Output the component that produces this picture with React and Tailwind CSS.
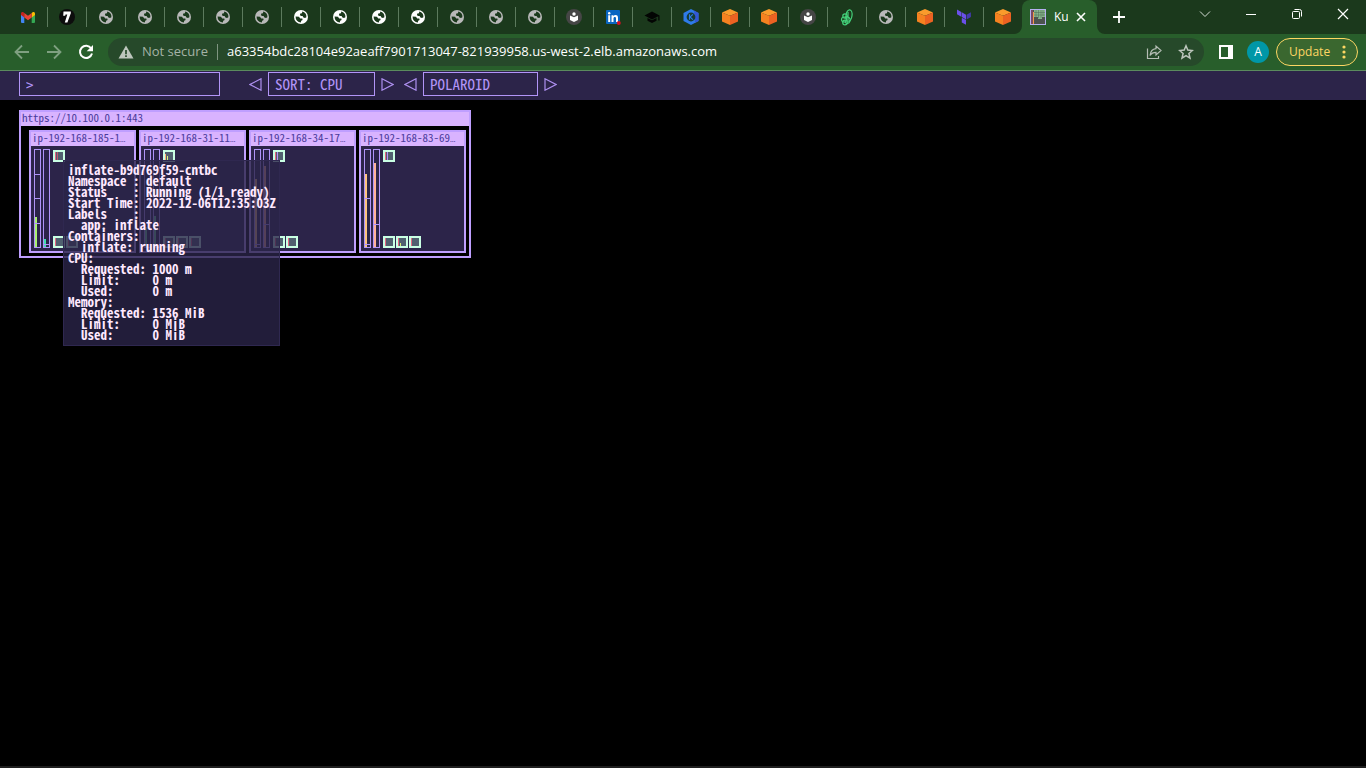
import React from 'react';

const MONO = "font-['Noto_Sans_Mono_CJK_SC','Liberation_Mono',monospace]";

function Globe({ bright }) {
  return (
    <svg viewBox="0 0 14 14" className="size-[14px]" aria-hidden="true">
      <circle cx="7" cy="7" r="7" fill={bright ? '#ffffff' : '#b9b9b9'} />
      <path
        d="M8.200 1.600 8 3.200 6.300 3.600 5.900 5.200 7.200 6 8.600 6.100 9.400 7.600 11 7.900 12.400 7.300A5.500 5.500 0 0 0 8.200 1.600ZM1.600 6.600 5 6.800 6.200 8.400 8.300 8.500 8.600 9.900 7.200 10.700 6.900 12.400A5.400 5.400 0 0 1 1.600 6.600Z"
        fill="#1b391c"
      />
    </svg>
  );
}

function Gmail() {
  return (
    <svg viewBox="0 0 14 11" className="h-[11px] w-[14px]" aria-hidden="true">
      <path d="M0 2v8a1 1 0 0 0 1 1h2.300V4.500Z" fill="#4285f4" />
      <path d="M14 2v8a1 1 0 0 1-1 1h-2.300V4.500Z" fill="#34a853" />
      <path d="M10.700 1v4.500L14 3V1.500C14 0 12.300-.5 11.200.5Z" fill="#fbbc04" />
      <path d="M0 1.500V3l3.300 2.500V1L2.800.5C1.700-.5 0 0 0 1.500Z" fill="#c5221f" />
      <path d="M3.300 1v4.500L7 8.300l3.700-2.800V1L7 3.800Z" fill="#ea4335" />
    </svg>
  );
}

function Seven() {
  return (
    <svg viewBox="0 0 16 16" className="size-4" aria-hidden="true">
      <circle cx="8" cy="8" r="8" fill="#0d0d0d" />
      <path d="M4.500 2.500h7.300v1.700L8.400 13.500H5.800L8.300 5.500H6.500L6.200 6.800H4.200Z" fill="#fff" />
    </svg>
  );
}

function Reader() {
  return (
    <svg viewBox="0 0 16 16" className="size-4" aria-hidden="true">
      <circle cx="8" cy="8" r="8" fill="#464646" />
      <path d="M4 6.500 8 8.300l4-1.800v4.600l-4 1.800-4-1.800Z" fill="#fff" />
      <circle cx="8" cy="5" r="1.700" fill="#fff" />
    </svg>
  );
}

function LinkedIn() {
  return (
    <svg viewBox="0 0 16 16" className="size-4" aria-hidden="true">
      <rect x="1" y="1" width="14" height="14" rx="1" fill="#0a66c2" />
      <path d="M3.200 6.300h2V13h-2ZM6.500 6.300h2v.9c.4-.7 1.100-1.100 2-1.100 1.900 0 2.500 1.200 2.500 3V13h-2V9.500c0-1-.3-1.600-1.100-1.600-.9 0-1.400.6-1.400 1.600V13h-2Z" fill="#fff" />
      <circle cx="4.200" cy="4.200" r="1.200" fill="#fff" />
      <circle cx="13.800" cy="14" r="2" fill="#d11124" />
    </svg>
  );
}

function Cap() {
  return (
    <svg viewBox="0 0 16 16" className="size-4" aria-hidden="true">
      <path d="M.5 6.500 8 2.500l7.500 4v5h-1.200V7.200L8 10.500ZM3.500 8.900 8 11.300l4.500-2.400v2.800L8 13.900l-4.500-2.200Z" fill="#030503" />
    </svg>
  );
}

function KubeHex() {
  return (
    <svg viewBox="0 0 16 16" className="size-4" aria-hidden="true">
      <path d="M8 0 15.500 4v8L8 16 .5 12V4Z" fill="#2e7bea" />
      <path d="M11 1.600 15.500 4v8L12 13.900Z" fill="#3358d4" />
      <circle cx="8" cy="8" r="4.400" fill="#173d33" />
      <path d="M6.500 5.300v5.400M9.900 5.300 7 8l2.900 2.700" stroke="#2e7bea" strokeWidth="1.100" fill="none" />
    </svg>
  );
}

function Cube() {
  return (
    <svg viewBox="0 0 16 16" className="size-4" aria-hidden="true">
      <path d="M8 0 16 3.500 8 6.800 0 3.500Z" fill="#fa9b2c" />
      <path d="M0 3.500 8 6.800V16L0 12.500Z" fill="#f58220" />
      <path d="M16 3.500 8 6.800V16l8-3.500Z" fill="#ec6222" />
    </svg>
  );
}

function Loops() {
  return (
    <svg viewBox="0 0 14 17" className="h-[17px] w-[14px]" fill="none" stroke="#44d17a" strokeWidth="1.200" aria-hidden="true">
      <ellipse cx="9" cy="6.500" rx="3" ry="5.700" transform="rotate(8 9 6.500)" />
      <circle cx="5" cy="7" r="2.200" />
      <circle cx="4" cy="10.500" r="2.500" />
      <circle cx="5" cy="13.500" r="2.300" />
      <path d="M5 8c3-1 6 1 5 4s-4 3-5 1M8 3v8" />
    </svg>
  );
}

function Terraform() {
  return (
    <svg viewBox="0 0 16 16" className="size-4" aria-hidden="true">
      <path d="M1 .500v4.700l4.300 2.500V3ZM5.800 3.300V8l4.200 2.400V5.700ZM5.800 8.700v4.700l4.200 2.400v-4.700Z" fill="#6b50ea" />
      <path d="M10.600 5.700v4.700l4.300-2.500V3.200Z" fill="#4339ae" />
    </svg>
  );
}

const tabs = [
  ['Gmail', <Gmail />],
  ['Seven', <Seven />],
  ...['1', '2', '3', '4', '5'].map((n) => ['Page ' + n, <Globe />]),
  ...['6', '7', '8', '9'].map((n) => ['Page ' + n, <Globe bright />]),
  ...['10', '11', '12'].map((n) => ['Page ' + n, <Globe />]),
  ['Reader', <Reader />],
  ['LinkedIn', <LinkedIn />],
  ['Courses', <Cap />],
  ['Kubernetes', <KubeHex />],
  ['AWS console', <Cube />],
  ['AWS services', <Cube />],
  ['Library', <Reader />],
  ['Loops', <Loops />],
  ['Page 13', <Globe />],
  ['AWS clusters', <Cube />],
  ['Terraform', <Terraform />],
  ['AWS load balancers', <Cube />],
];

function TabStrip() {
  return (
    <div className="flex h-[34px] bg-[#1b391c] pl-2">
      {tabs.map(([name, icon], i) => (
        <button
          key={name}
          aria-label={name}
          className="relative flex w-[39px] shrink-0 items-center justify-center"
        >
          {icon}
          {i < tabs.length - 1 && (
            <span className="absolute -right-px top-[7px] h-5 w-px bg-[#5c7a5d]" />
          )}
        </button>
      ))}
      <div className="relative flex h-[34px] w-[75px] shrink-0 items-center rounded-t-lg bg-[#285e2b] pl-2">
        <svg viewBox="0 0 8 8" className="absolute -left-2 bottom-0 size-2" aria-hidden="true">
          <path d="M8 0v8H0a8 8 0 0 0 8-8Z" fill="#285e2b" />
        </svg>
        <svg viewBox="0 0 8 8" className="absolute -right-2 bottom-0 size-2" aria-hidden="true">
          <path d="M0 0v8h8a8 8 0 0 1-8-8Z" fill="#285e2b" />
        </svg>
        <svg viewBox="0 0 16 16" className="size-4 shrink-0" aria-hidden="true">
          <path d="M0 0h16v16H0Z" fill="#4d5350" />
          <path d="M1 1h2v14H1Z" fill="#7b4a63" />
          <path d="M3 3h1v12H3Z" fill="#f09a4a" />
          <path d="M4 1h11v7h-3v2H8V8H4Z" fill="#86b58d" />
          <path d="M6 1v8M8.500 1v8M11 1v8M13 1v6M4 3.500h11M4 6h11" stroke="#4c6b52" strokeWidth=".5" />
          <rect x=".5" y=".5" width="15" height="15" fill="none" stroke="#b5b0f0" />
        </svg>
        <span className="ml-2 w-[14px] overflow-hidden whitespace-nowrap text-xs text-white">Ku</span>
        <button aria-label="Close tab" className="ml-2 flex items-center">
          <svg viewBox="0 0 10 10" className="size-[10px]" aria-hidden="true">
            <path d="m1 1 8 8M9 1 1 9" stroke="#fff" strokeWidth="1.600" />
          </svg>
        </button>
      </div>
      <button aria-label="New tab" className="ml-4 flex items-center">
        <svg viewBox="0 0 12 12" className="size-3" aria-hidden="true">
          <path d="M6 0v12M0 6h12" stroke="#fff" strokeWidth="1.800" />
        </svg>
      </button>
      <div className="ml-auto flex h-7 items-center gap-[34px] pr-[17px]">
        <button aria-label="Search tabs">
          <svg viewBox="0 0 12 12" className="size-3" fill="none" stroke="#d5dcd5" aria-hidden="true">
            <path d="m1 3.500 5 5 5-5" />
          </svg>
        </button>
        <button aria-label="Minimize">
          <svg viewBox="0 0 12 12" className="size-3" fill="none" stroke="#fff" aria-hidden="true">
            <path d="M1 6.500h10" />
          </svg>
        </button>
        <button aria-label="Restore">
          <svg viewBox="0 0 12 12" className="size-3" fill="none" stroke="#fff" aria-hidden="true">
            <rect x="1.500" y="3.500" width="7" height="7" rx="1" />
            <path d="M3.500 1.500h5a2 2 0 0 1 2 2v5" />
          </svg>
        </button>
        <button aria-label="Close window">
          <svg viewBox="0 0 12 12" className="size-3" fill="none" stroke="#fff" strokeWidth="1.200" aria-hidden="true">
            <path d="m1 1 10 10M11 1 1 11" />
          </svg>
        </button>
      </div>
    </div>
  );
}

function Toolbar() {
  return (
    <div className="flex h-[37px] items-center border-b border-[#5b8a5e] bg-[#285e2b] pl-[14px] pr-2">
      <button aria-label="Back" className="mr-4">
        <svg viewBox="0 0 16 16" className="size-4" fill="none" stroke="#7fa081" strokeWidth="1.800" aria-hidden="true">
          <path d="M15 8H2M8 1.500 1.500 8 8 14.500" />
        </svg>
      </button>
      <button aria-label="Forward" className="mr-4">
        <svg viewBox="0 0 16 16" className="size-4" fill="none" stroke="#7fa081" strokeWidth="1.800" aria-hidden="true">
          <path d="M1 8h13M8 1.500 14.500 8 8 14.500" />
        </svg>
      </button>
      <button aria-label="Reload" className="mr-[14px]">
        <svg viewBox="0 0 16 16" className="size-4" aria-hidden="true">
          <path d="M13.200 4.500A6.100 6.100 0 1 0 14 9.500" fill="none" stroke="#fff" strokeWidth="2" />
          <path d="M15 1v6.300H8.700Z" fill="#fff" />
        </svg>
      </button>
      <div className="flex h-7 grow items-center rounded-full bg-[#26492a] pl-[10px] pr-[10px]">
        <svg viewBox="0 0 16 14" className="h-[14px] w-4 shrink-0" aria-hidden="true">
          <path d="M8 .5 15.500 13.500H.5Z" fill="#bdc6bd" />
          <path d="M8 5v4.200M8 10.300v1.700" stroke="#26492a" strokeWidth="1.700" />
        </svg>
        <span className="ml-2 w-[68px] shrink-0 whitespace-nowrap text-[13px] text-[#a5b3a6]">Not secure</span>
        <span className="ml-[7px] h-4 w-px shrink-0 bg-[#7f9581]" />
        <input
          aria-label="Address"
          readOnly
          value="a63354bdc28104e92aeaff7901713047-821939958.us-west-2.elb.amazonaws.com"
          className="ml-[9px] min-w-0 grow bg-transparent text-[13px] text-white outline-none"
        />
        <button aria-label="Share" className="mr-4">
          <svg viewBox="0 0 16 16" className="size-4" fill="none" stroke="#b4bdb4" strokeWidth="1.200" aria-hidden="true">
            <path d="M1.500 4.500v10h11V12" />
            <path d="M10 2v2.700C6.500 5 4.500 7.500 4 11.500 5.500 9 7.500 8.300 10 8.300V11l5-4.500Z" />
          </svg>
        </button>
        <button aria-label="Bookmark this tab">
          <svg viewBox="0 0 16 16" className="size-4" fill="none" stroke="#bdc6bd" strokeWidth="1.500" aria-hidden="true">
            <path d="m8 1.800 1.800 4.300 4.600.4-3.500 3 1.100 4.600L8 11.600l-4 2.500 1.100-4.600-3.500-3 4.600-.4Z" />
          </svg>
        </button>
      </div>
      <button aria-label="Side panel" className="ml-[15px]">
        <svg viewBox="0 0 14 14" className="size-[14px]" aria-hidden="true">
          <rect width="14" height="14" fill="#fff" />
          <rect x="2" y="2" width="7" height="10" fill="#285e2b" />
        </svg>
      </button>
      <button aria-label="Profile" className="ml-[14px] size-[22px] rounded-full bg-[#0097a7] text-xs text-white">
        A
      </button>
      <button className="ml-[7px] flex h-7 w-[82px] items-center justify-between rounded-full border border-[#fdd663] bg-[#3a672f] pl-3 pr-[11px] text-xs text-[#fdd663]">
        Update
        <svg viewBox="0 0 4 14" className="h-[14px] w-1" fill="#fdd663" aria-hidden="true">
          <circle cx="2" cy="2" r="1.600" />
          <circle cx="2" cy="7" r="1.600" />
          <circle cx="2" cy="12" r="1.600" />
        </svg>
      </button>
    </div>
  );
}

function Arrow({ label, right }) {
  return (
    <button aria-label={label} className="flex shrink-0">
      <svg viewBox="0 0 13 13" className="size-[13px]" fill="none" stroke="#ae90f0" strokeWidth="1.200" aria-hidden="true">
        <path d={right ? 'M1 .8v11.400L12 6.500Z' : 'M12 .8v11.400L1 6.500Z'} />
      </svg>
    </button>
  );
}

function Picker({ name, value, width }) {
  return (
    <div role="group" aria-label={name} className="flex items-center gap-[6px]">
      <Arrow label={'Previous ' + name} />
      <output className={`flex h-6 items-center border border-[#b295f8] pl-[6px] whitespace-pre ${width}`}>{value}</output>
      <Arrow label={'Next ' + name} right />
    </div>
  );
}

function MenuBar() {
  return (
    <div className={`flex h-[29px] items-start bg-[#2c2449] pt-px pl-[19px] text-[15px] font-medium text-[#b295f8] ${MONO}`}>
      <input
        aria-label="Filter"
        placeholder=">"
        className="h-6 w-[201px] border border-[#b295f8] bg-transparent pl-[6px] outline-none placeholder:text-[#b295f8]"
      />
      <div className="ml-[29px] flex gap-[10px]">
        <Picker name="sort order" value="SORT: CPU" width="w-[107px]" />
        <Picker name="theme" value="POLAROID" width="w-[115px]" />
      </div>
    </div>
  );
}

const red = ['#e5687f', 2, 1, 8];
const darkRed = ['#c2546e', 4, 1, 8];
const nodes = [
  {
    name: 'ip-192-168-185-1',
    bars: [{ fill: 30, color: '#a8f06e', ticks: [25, 49, 74] }, { fill: 8, color: '#3fe0b0', ticks: [95] }],
    top: [[red, darkRed]],
    bottom: [[red], [red]],
  },
  {
    name: 'ip-192-168-31-11',
    bars: [{ fill: 20, color: '#6fd89a', ticks: [] }, { fill: 31, color: '#6fd89a', ticks: [] }],
    top: [[['#ffb36b', 2, 1, 6], ['#d9f07a', 4, 1, 4]]],
    bottom: [[red], [red], [red]],
  },
  {
    name: 'ip-192-168-34-17',
    bars: [{ fill: 68, color: '#ffc37d', ticks: [95] }, { fill: 81, color: '#ffb197', ticks: [75] }],
    top: [[red, ['#b98cf5', 4, 1, 8]]],
    bottom: [[red], [red]],
  },
  {
    name: 'ip-192-168-83-69',
    bars: [{ fill: 73, color: '#ffc37d', ticks: [49, 95] }, { fill: 84, color: '#ffb197', ticks: [75] }],
    top: [[red, ['#b98cf5', 4, 1, 8]]],
    bottom: [[red], [red, ['#d9f07a', 4, 1, 3]], [red]],
  },
];

function UsageBar({ fill, color, ticks }) {
  return (
    <svg viewBox="0 0 7 99" className="h-[99px] w-[7px]" aria-hidden="true">
      <rect x=".5" y=".5" width="6" height="98" fill="none" stroke="#b094f8" />
      <rect x="1" y={98 - fill} width="2" height={fill} fill={color} />
      {ticks.map((y) => (
        <path key={y} d={`M1 ${y + 0.5}h5`} stroke="#b094f8" />
      ))}
    </svg>
  );
}

function Pod({ marks }) {
  return (
    <svg viewBox="0 0 12 12" className="size-3" aria-hidden="true">
      <rect x="1" y="1" width="10" height="10" fill="#50606f" stroke="#c9ffe3" strokeWidth="2" />
      {marks.map(([color, x, w, h]) => (
        <rect key={x} x={x} y={10 - h} width={w} height={h} fill={color} />
      ))}
    </svg>
  );
}

function NodePanel({ node }) {
  return (
    <section className="w-[107px] border-2 border-[#bf9fff] bg-[#2c2449]">
      <h2 className="h-[14px] bg-[#d9b3ff] pl-px text-[11px] leading-[10px] font-normal whitespace-nowrap text-[#4a3b9c]">
        {node.name}
        <span className="font-['Liberation_Mono',monospace] text-[9px]">…</span>
      </h2>
      <div className="flex gap-[2px] pt-[3px] pr-[2px] pb-[3px] pl-[3px]">
        {node.bars.map((bar, i) => (
          <UsageBar key={i} {...bar} />
        ))}
        <div className="ml-px flex flex-col justify-between pt-px">
          {[node.top, node.bottom].map((row, r) => (
            <div key={r} className="flex gap-px">
              {row.map((marks, i) => (
                <Pod key={i} marks={marks} />
              ))}
            </div>
          ))}
        </div>
      </div>
    </section>
  );
}

const details = `inflate-b9d769f59-cntbc
Namespace : default
Status    : Running (1/1 ready)
Start Time: 2022-12-06T12:35:03Z
Labels    :
  app: inflate
Containers:
  inflate: running
CPU:
  Requested: 1000 m
  Limit:     0 m
  Used:      0 m
Memory:
  Requested: 1536 MiB
  Limit:     0 MiB
  Used:      0 MiB`;

function Cluster() {
  return (
    <div className={`relative w-fit slashed-zero ${MONO}`}>
      <section className="border-2 border-[#bf9fff]">
        <h1 className="h-[14px] bg-[#d9b3ff] pl-px text-[11px] leading-[10px] text-[#4a3b9c]">https://10.100.0.1:443</h1>
        <div className="flex gap-[3px] pt-1 pr-[3px] pb-[3px] pl-2">
          {nodes.map((node) => (
            <NodePanel key={node.name} node={node} />
          ))}
        </div>
      </section>
      <pre
        role="tooltip"
        className={`absolute top-[50px] left-[44px] h-[186px] w-[217px] border border-[#2f2850] bg-[#2b2449]/80 pt-[3px] pl-1 text-[13px] leading-[11px] font-bold text-[#ffe9ff] ${MONO}`}
      >
        {details}
      </pre>
    </div>
  );
}

export default function App() {
  return (
    <div className="flex min-h-screen flex-col bg-black font-['Open_Sans','Noto_Sans',sans-serif]">
      <header>
        <TabStrip />
        <Toolbar />
      </header>
      <main className="grow">
        <MenuBar />
        <div className="pt-[10px] pl-[19px]">
          <Cluster />
        </div>
      </main>
      <div className="h-[2px] bg-[#1f1f1f]" />
    </div>
  );
}
